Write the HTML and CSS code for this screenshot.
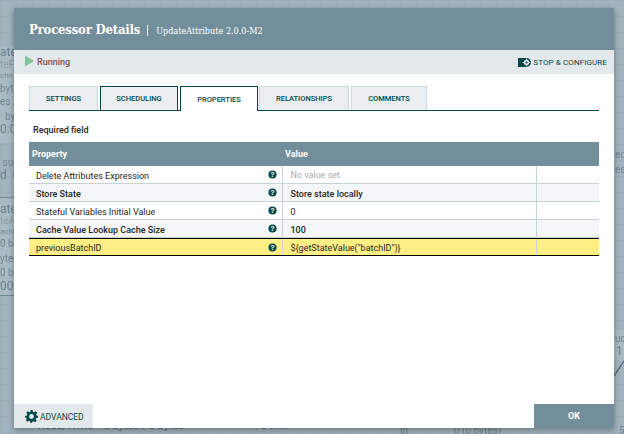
FILE: index.html
```html
<!DOCTYPE html>
<html lang="en">
<head>
<meta charset="utf-8">
<title>Processor Details</title>
<link rel="stylesheet" href="styles.css">
</head>
<body>
<div class="canvas">
  <div class="box box-a"></div>
  <div class="box box-b"></div>
  <div class="box box-c"></div>
  <div class="frag f1 big">ate</div>
  <div class="frag f2 link">teF</div>
  <div class="frag f3 tiny">che.r</div>
  <div class="frag f4">byte</div>
  <div class="frag f5">es /</div>
  <div class="frag f6">&nbsp;&nbsp;byt</div>
  <div class="frag f7 big">0:00</div>
  <div class="frag f8">&nbsp;suc</div>
  <div class="frag f9 big">d&nbsp;&nbsp;0</div>
  <div class="frag f10 big">ate</div>
  <div class="frag f11 link">teA</div>
  <div class="frag f12 tiny">ache</div>
  <div class="frag f13">0 b</div>
  <div class="frag f14">ytes</div>
  <div class="frag f15">0 b</div>
  <div class="frag f16 big">00:</div>
  <div class="frag f17">ed</div>
  <div class="frag f18">es</div>
  <div class="frag f19">uc</div>
  <div class="frag f20 big">1</div>
  <div class="frag f21">In</div>
  <div class="frag f22">0 (0 bytes)</div>
  <div class="frag f23">5</div>
  <div class="frag f24 dark">Read/Write&nbsp;&nbsp;&nbsp;&nbsp;0 bytes / 0 bytes</div>
  <div class="frag f25 dark">5 min</div>
  <svg class="edge" width="10" height="16" viewBox="0 0 10 16"><path d="M0 16L10 1" stroke="#4a5f6a" stroke-width="1.2" fill="none"/></svg>
</div>

<div class="dialog">
  <header class="dialog-header">
    <span class="dialog-title">Processor Details</span>
    <span class="dialog-sep"></span>
    <span class="dialog-sub">UpdateAttribute 2.0.0-M2</span>
  </header>

  <div class="toolbar">
    <div class="status">
      <svg class="play" width="9" height="12" viewBox="0 0 9 12"><path d="M0 0.5L9 6L0 11.5Z" fill="#7dc7a0"/></svg>
      <span class="status-text">Running</span>
    </div>
    <div class="stop">
      <svg class="stop-icon" width="13" height="11" viewBox="0 0 13 11">
        <path d="M0 1h8v9H0Z" fill="#004849"/>
        <circle cx="8.500" cy="5.500" r="4.400" fill="#004849"/>
        <circle cx="8.500" cy="5.500" r="2.700" fill="#e3e8eb"/>
        <path d="M8.500 1.800v1.400M8.500 7.800v1.400M4.800 5.500h1.400M10.800 5.500h1.400" stroke="#e3e8eb" stroke-width="1.200"/>
        <circle cx="8.500" cy="5.500" r="1.100" fill="#004849"/>
      </svg>
      <span>Stop &amp; Configure</span>
    </div>
  </div>

  <div class="content">
    <nav class="tabs">
      <div class="tab tab-settings">Settings</div>
      <div class="tab tab-scheduling focus">Scheduling</div>
      <div class="tab tab-properties active">Properties</div>
      <div class="tab tab-relationships">Relationships</div>
      <div class="tab tab-comments">Comments</div>
    </nav>

    <div class="required">Required field</div>

    <div class="table">
      <div class="row head">
        <div class="cell">Property</div>
        <div class="cell">Value</div>
        <div class="cell"></div>
      </div>
      <div class="row">
        <div class="cell name"><span>Delete Attributes Expression</span><svg class="help" viewBox="0 0 10 10"><circle cx="5" cy="5" r="4.500"/><text x="5" y="8">?</text></svg></div>
        <div class="cell val empty">No value set</div>
        <div class="cell end"></div>
      </div>
      <div class="row alt strong">
        <div class="cell name"><span>Store State</span><svg class="help" viewBox="0 0 10 10"><circle cx="5" cy="5" r="4.500"/><text x="5" y="8">?</text></svg></div>
        <div class="cell val">Store state locally</div>
        <div class="cell end"></div>
      </div>
      <div class="row">
        <div class="cell name"><span>Stateful Variables Initial Value</span><svg class="help" viewBox="0 0 10 10"><circle cx="5" cy="5" r="4.500"/><text x="5" y="8">?</text></svg></div>
        <div class="cell val">0</div>
        <div class="cell end"></div>
      </div>
      <div class="row alt strong">
        <div class="cell name"><span>Cache Value Lookup Cache Size</span><svg class="help" viewBox="0 0 10 10"><circle cx="5" cy="5" r="4.500"/><text x="5" y="8">?</text></svg></div>
        <div class="cell val">100</div>
        <div class="cell end"></div>
      </div>
      <div class="row selected">
        <div class="cell name"><span>previousBatchID</span><svg class="help" viewBox="0 0 10 10"><circle cx="5" cy="5" r="4.500"/><text x="5" y="8">?</text></svg></div>
        <div class="cell val">${getStateValue("batchID")}</div>
        <div class="cell end"></div>
      </div>
    </div>
  </div>

  <footer class="footer">
    <div class="btn-advanced">
      <svg class="gear" width="13" height="13" viewBox="0 0 24 24"><path fill="#004849" fill-rule="evenodd" d="M10 0h4l.7 3.300 2.200.9L19.800 2.300l2.800 2.800-1.900 2.900.9 2.200L24 10.900v3.200l-3.400.7-.9 2.200 1.900 2.900-2.800 2.800-2.900-1.900-2.200.9L13 24h-3l-.7-3.300-2.200-.9-2.900 1.900-2.800-2.800 1.900-2.900-.9-2.200L0 14.100v-3.200l3.400-.7.9-2.200-1.900-2.900 2.800-2.800 2.900 1.900 2.200-.9ZM12 7.500a4.500 4.500 0 1 0 0 9 4.500 4.500 0 0 0 0-9Z"/></svg>
      <span class="btn-label">Advanced</span>
    </div>
    <div class="btn-ok">OK</div>
  </footer>
</div>
</body>
</html>
```

FILE: styles.css
```css
* { box-sizing: border-box; }
html, body { margin: 0; height: 100%; overflow: hidden; }
body {
  width: 624px;
  height: 434px;
  position: relative;
  font-family: Roboto, sans-serif;
  background-color: #a1b3bd;
}

/* dimmed flow canvas behind the dialog */
.canvas {
  position: absolute;
  inset: 0;
  background-image:
    linear-gradient(#9cafb9 1px, transparent 1px),
    linear-gradient(90deg, #9cafb9 1px, transparent 1px);
  background-size: 16px 16px;
  overflow: hidden;
}
.box { position: absolute; background: #a9bac3; }
.box-a { left: 0; top: 46px; width: 14px; height: 97px; }
.box-b { left: 0; top: 197px; width: 14px; height: 99px; border-top: 1px solid #6f8a96; border-bottom: 1px solid #6f8a96; }
.box-c { left: 614px; top: 330px; width: 10px; height: 30px; }
.frag {
  position: absolute;
  left: 0;
  font-size: 10px;
  line-height: 11px;
  color: #708692;
  white-space: nowrap;
  filter: blur(0.4px);
}
.frag.big { font-size: 12px; color: #6b818c; }
.frag.link { color: #8ba0ab; }
.frag.tiny { font-size: 8px; color: #748b96; }
.frag.dark { font-size: 11px; color: #566a75; }
.f1 { top: 47px; } .f2 { top: 59px; } .f3 { top: 70px; } .f4 { top: 83px; }
.f5 { top: 96px; } .f6 { top: 111px; } .f7 { top: 124px; } .f8 { top: 157px; }
.f9 { top: 170px; } .f10 { top: 204px; } .f11 { top: 215px; } .f12 { top: 226px; }
.f13 { top: 238px; } .f14 { top: 253px; } .f15 { top: 267px; } .f16 { top: 281px; }
.f17 { left: 615px; top: 149px; }
.f18 { left: 615px; top: 164px; }
.f19 { left: 615px; top: 333px; }
.f20 { left: 616px; top: 346px; }
.f21 { left: 400px; top: 425px; }
.f22 { left: 454px; top: 425px; }
.f23 { left: 619px; top: 425px; }
.f24 { left: 38px; top: 420px; }
.f25 { left: 261px; top: 420px; }
.edge { position: absolute; left: 614px; top: 360px; }

/* dialog */
.dialog {
  position: absolute;
  left: 14px;
  top: 8px;
  width: 600px;
  height: 420px;
  background: #fff;
  display: flex;
  flex-direction: column;
  box-shadow: 0 2px 6px rgba(0, 0, 0, .35);
}
.dialog-header {
  height: 42px;
  background: #728e9b;
  display: flex;
  align-items: center;
  padding-left: 15px;
  color: #fff;
}
.dialog-title {
  font-family: "DejaVu Serif Condensed", "DejaVu Serif", serif;
  font-weight: 700;
  font-size: 13px;
  letter-spacing: -0.200px;
}
.dialog-sep {
  width: 1px;
  height: 11px;
  background: #fff;
  margin: 2px 8px 0 7px;
}
.dialog-sub {
  font-family: "DejaVu Serif Condensed", "DejaVu Serif", serif;
  font-size: 9px;
  margin-top: 3px;
}
.toolbar {
  height: 24px;
  background: #e3e8eb;
  display: flex;
  justify-content: space-between;
  align-items: center;
  padding: 0 7px 0 11px;
}
.status { display: flex; align-items: center; gap: 3px; }
.play { margin-top: -3px; }
.status-text { font-size: 9px; font-weight: 500; color: #775351; }
.stop {
  display: flex;
  align-items: center;
  gap: 2px;
  font-size: 8px;
  letter-spacing: .1px;
  text-transform: uppercase;
  color: #004849;
  margin-top: 1px;
}

.content { flex: 1; padding: 12px 15px 0; }
.tabs {
  display: flex;
  height: 25px;
  gap: 2px;
  border-bottom: 1px solid #004849;
}
.tab {
  height: 24px;
  background: #eaeef0;
  border: 1px solid #cbd8dd;
  border-bottom: 0;
  display: flex;
  align-items: center;
  justify-content: center;
  font-size: 7.500px;
  font-weight: 500;
  text-transform: uppercase;
  color: #004849;
}
.tab-settings { width: 69px; }
.tab-scheduling { width: 78px; }
.tab-properties { width: 78px; }
.tab-relationships { width: 90px; margin-left: -1px; }
.tab-comments { width: 76px; }
.tab.focus { border-color: #004849; }
.tab.active {
  background: #fff;
  border-color: #004849;
  height: 25px;
  position: relative;
  z-index: 1;
}
.required {
  margin: 13px 0 0 4px;
  height: 18px;
  font-size: 9px;
  line-height: 12px;
  font-weight: 500;
  color: #262626;
}

.row {
  display: grid;
  grid-template-columns: 254px 254px 62px;
  height: 18px;
  font-size: 9px;
  color: #262626;
  border-bottom: 1px solid #c7d2d7;
}
.row.alt { background: #f4f6f7; }
.row.strong { font-weight: 500; }
.row.head {
  height: 24px;
  background: #728e9b;
  color: #fff;
  font-weight: 700;
  border: 0;
}
.row.head .cell { padding-left: 3px; }
.row.head .cell:nth-child(2) { padding-left: 2px; }
.cell { display: flex; align-items: center; }
.cell.name { justify-content: space-between; padding: 0 5px 0 7px; border-right: 1px solid #c7d2d7; }
.cell.name span { padding-top: 2px; }
.cell.val { padding: 2px 0 0 7.500px; border-right: 1px solid #c7d2d7; }
.cell.val.empty { color: #aaa; padding-top: 1px; }
.row.selected {
  background: #ffef85;
  border-top: 1px solid #000;
  border-bottom: 1px solid #000;
}
.help { width: 9px; height: 9px; flex: none; }
.help circle { fill: #004849; }
.help text {
  fill: #fff;
  font-family: "Liberation Sans", sans-serif;
  font-weight: 700;
  font-size: 8px;
  text-anchor: middle;
}

.footer {
  height: 24px;
  display: flex;
  justify-content: space-between;
}
.btn-advanced {
  width: 79px;
  background: #e3e8eb;
  display: flex;
  align-items: center;
  gap: 2px;
  padding-left: 11px;
  font-size: 8.500px;
  text-transform: uppercase;
  color: #004849;
}
.btn-label { padding-top: 2px; }
.btn-ok {
  width: 80px;
  background: #728e9b;
  display: flex;
  align-items: center;
  justify-content: center;
  color: #fff;
  font-size: 9px;
  font-weight: 700;
}
```
